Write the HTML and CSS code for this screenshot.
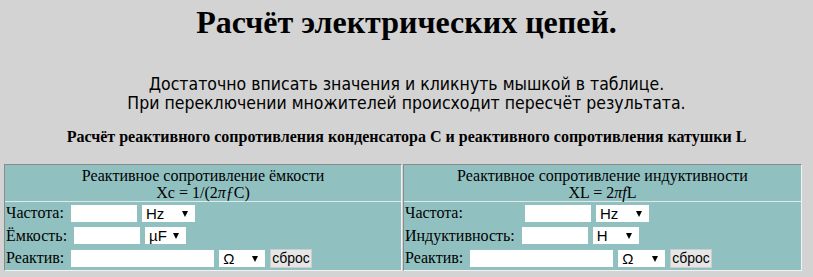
FILE: index.html
```html
<!DOCTYPE html>
<html lang="ru">
<head>
    <meta charset="UTF-8">
    <title>Расчёт электрических цепей</title>
    <link rel="stylesheet" href="styles.css">
</head>
<body>
    <h1 class="title">Расчёт электрических цепей.</h1>

    <p class="intro">
        Достаточно вписать значения и кликнуть мышкой в таблице.<br>
        При переключении множителей происходит пересчёт результата.
    </p>

    <h4 class="subtitle">Расчёт реактивного сопротивления конденсатора C и реактивного сопротивления катушки L</h4>

    <div class="calc">
        <div class="panel">
            <div class="panel-head">
                Реактивное сопротивление ёмкости<br>
                Xc = 1/(2<i>π</i><i>ƒ</i>C)
            </div>
            <div class="panel-body">
                <div class="row">
                    <span class="label">Частота:</span>
                    <input class="field" type="text">
                    <span class="pick w53"><select><option>Hz</option></select></span>
                </div>
                <div class="row">
                    <span class="label">Ёмкость:</span>
                    <input class="field" type="text">
                    <span class="pick w41"><select><option>µF</option></select></span>
                </div>
                <div class="row">
                    <span class="label">Реактив:</span>
                    <input class="field wide" type="text">
                    <span class="pick w46"><select><option>Ω</option></select></span>
                    <button class="reset">сброс</button>
                </div>
            </div>
        </div>

        <div class="panel">
            <div class="panel-head">
                Реактивное сопротивление индуктивности<br>
                XL = 2<i>π</i><i>f</i>L
            </div>
            <div class="panel-body">
                <div class="row">
                    <span class="label lw-freq">Частота:</span>
                    <input class="field" type="text">
                    <span class="pick w53"><select><option>Hz</option></select></span>
                </div>
                <div class="row">
                    <span class="label">Индуктивность:</span>
                    <input class="field" type="text">
                    <span class="pick w46"><select><option>H</option></select></span>
                </div>
                <div class="row">
                    <span class="label">Реактив:</span>
                    <input class="field wide" type="text">
                    <span class="pick w47"><select><option>Ω</option></select></span>
                    <button class="reset">сброс</button>
                </div>
            </div>
        </div>
    </div>
</body>
</html>
```

FILE: styles.css
```css
* {
    box-sizing: border-box;
}

body {
    margin: 0;
    background: #d3d3d3;
    color: #000;
    font-family: 'Liberation Serif', 'Times New Roman', serif;
}

.title {
    margin: 4px 0 0;
    font-size: 32px;
    line-height: 37px;
    text-align: center;
}

.intro {
    margin: 34px 0 0;
    font-family: 'DejaVu Sans Condensed', 'DejaVu Sans', sans-serif;
    font-stretch: condensed;
    font-size: 17.5px;
    line-height: 19px;
    text-align: center;
}

.subtitle {
    margin: 15px 0 0;
    font-size: 16px;
    line-height: 18px;
    text-align: center;
}

.calc {
    display: grid;
    grid-template-columns: 398px 399px;
    gap: 1px;
    margin: 18px 0 0 4px;
    width: 798px;
}

.panel {
    background: #91c0c0;
    border: 1px solid;
    border-color: #8a8a8a #f2f2f2 #f2f2f2 #8a8a8a;
}

.panel-head {
    height: 37px;
    padding-top: 2px;
    font-size: 16px;
    line-height: 17px;
    text-align: center;
    border-bottom: 1px solid #dfe9e9;
}

.panel-head i {
    font-style: italic;
}

.panel-body {
    padding: 0 1px;
}

.row {
    display: flex;
    align-items: center;
    gap: 5px;
    height: 22.5px;
    font-size: 16px;
}

.label {
    margin-right: 2px;
}

.lw-freq {
    width: 113px;
}

.field {
    width: 66px;
    height: 17px;
    padding: 0 2px;
    border: none;
    background: #fff;
    font: 14px 'Liberation Sans', Arial, sans-serif;
}

.field.wide {
    width: 143px;
}

.pick {
    position: relative;
    display: inline-block;
    height: 17px;
    background: #fff;
}

.pick select {
    appearance: none;
    width: 100%;
    height: 17px;
    padding: 0 0 0 4px;
    border: none;
    background: transparent;
    font: 15px/17px 'Liberation Sans', Arial, sans-serif;
    color: #000;
}

.pick::after {
    content: "";
    position: absolute;
    right: 7px;
    top: 6px;
    border-left: 3.5px solid transparent;
    border-right: 3.5px solid transparent;
    border-top: 6px solid #000;
    pointer-events: none;
}

.w41 { width: 41px; }
.w46 { width: 46px; }
.w47 { width: 47px; }
.w53 { width: 53px; }

.reset {
    height: 19px;
    padding: 0 1px;
    border: 1px solid #cdcdcd;
    background: #e6e6e6;
    font: 14px 'Liberation Sans', Arial, sans-serif;
    color: #000;
}
```
